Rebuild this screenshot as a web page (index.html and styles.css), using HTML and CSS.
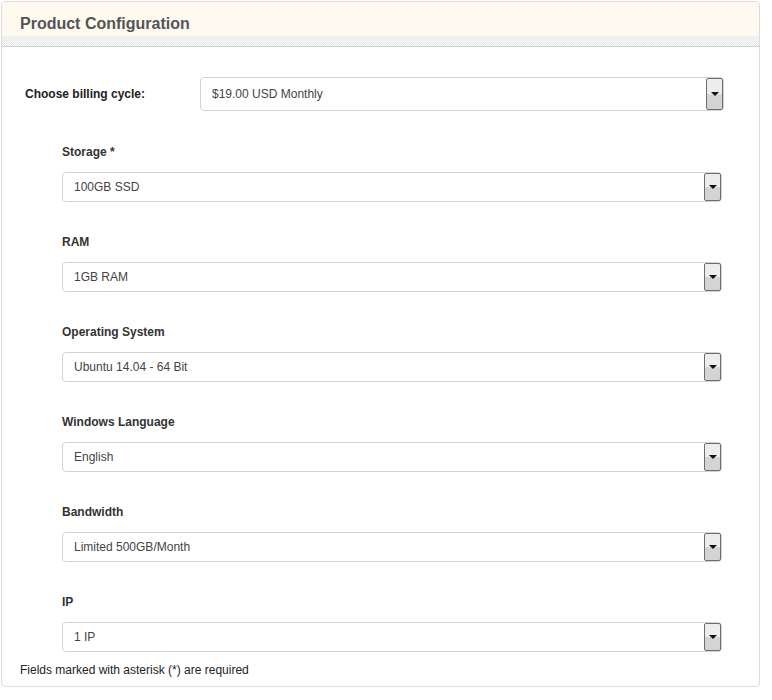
FILE: index.html
```html
<!DOCTYPE html>
<html>
<head>
<meta charset="utf-8">
<link rel="stylesheet" href="styles.css">
</head>
<body>
<div class="panel">
  <div class="panel-head">
    <h2 class="title">Product Configuration</h2>
  </div>
  <div class="panel-body">
    <div class="billing-row">
      <div class="billing-label">Choose billing cycle:</div>
      <div class="select select-lg"><span class="select-text">$19.00 USD Monthly</span><span class="select-btn"><span class="arrow"></span></span></div>
    </div>
    <div class="groups">
      <div class="group">
        <div class="group-label">Storage *</div>
        <div class="select"><span class="select-text">100GB SSD</span><span class="select-btn"><span class="arrow"></span></span></div>
      </div>
      <div class="group">
        <div class="group-label">RAM</div>
        <div class="select"><span class="select-text">1GB RAM</span><span class="select-btn"><span class="arrow"></span></span></div>
      </div>
      <div class="group">
        <div class="group-label">Operating System</div>
        <div class="select"><span class="select-text">Ubuntu 14.04 - 64 Bit</span><span class="select-btn"><span class="arrow"></span></span></div>
      </div>
      <div class="group">
        <div class="group-label">Windows Language</div>
        <div class="select"><span class="select-text">English</span><span class="select-btn"><span class="arrow"></span></span></div>
      </div>
      <div class="group">
        <div class="group-label">Bandwidth</div>
        <div class="select"><span class="select-text">Limited 500GB/Month</span><span class="select-btn"><span class="arrow"></span></span></div>
      </div>
      <div class="group">
        <div class="group-label">IP</div>
        <div class="select"><span class="select-text">1 IP</span><span class="select-btn"><span class="arrow"></span></span></div>
      </div>
    </div>
    <p class="note">Fields marked with asterisk (*) are required</p>
  </div>
</div>
</body>
</html>
```

FILE: styles.css
```css
html, body {
  margin: 0;
  padding: 0;
  background: #fff;
}
body {
  font-family: "Liberation Sans", Arial, sans-serif;
  font-size: 12px;
  color: #333;
}
.panel {
  box-sizing: border-box;
  margin: 1px 0 0 1px;
  width: 759px;
  height: 686px;
  border: 1px solid #dcdcdc;
  border-radius: 4px;
  overflow: hidden;
}
.panel-head {
  height: 44px;
  background-color: #fffaf0;
  border-bottom: 1px solid #cfcfcf;
  position: relative;
  display: flex;
  flex-direction: column;
}
.panel-head::after {
  content: "";
  display: block;
  height: 10px;
  margin-top: auto;
  background-color: #f6f6f6;
  background-image: repeating-conic-gradient(#e6e6e6 0 25%, #fafafa 0 50%);
  background-size: 2px 2px;
}
.title {
  margin: 0;
  padding: 13px 0 0 18px;
  font-size: 16px;
  line-height: 18px;
  font-weight: bold;
  color: #555;
}
.panel-body {
  padding: 30px 0 0 0;
}
.billing-row {
  display: flex;
  align-items: center;
  padding-left: 23px;
}
.billing-label {
  width: 175px;
  font-weight: bold;
  color: #222;
}
.select {
  box-sizing: border-box;
  position: relative;
  display: flex;
  align-items: center;
  height: 30px;
  width: 660px;
  border: 1px solid #d2d2d2;
  border-radius: 4px;
  background: #fff;
}
.select-lg {
  width: 524px;
  height: 34px;
}
.select-text {
  padding-left: 11px;
  color: #444;
}
.select-btn {
  box-sizing: border-box;
  position: absolute;
  right: 0;
  top: 0;
  bottom: 0;
  width: 17px;
  border: 1px solid #6e6e6e;
  border-radius: 2px;
  background: linear-gradient(#ededed 0 50%, #d4d4d4 50% 100%);
  display: flex;
  align-items: center;
  justify-content: center;
}
.arrow {
  width: 0;
  height: 0;
  border-left: 4px solid transparent;
  border-right: 4px solid transparent;
  border-top: 4px solid #111;
}
.groups {
  padding: 31px 0 0 60px;
  display: flex;
  flex-direction: column;
  gap: 30px;
}
.group-label {
  font-weight: bold;
  line-height: 17px;
  padding-top: 2px;
  margin-bottom: 11px;
  color: #333;
}
.note {
  margin: 11px 0 0 18px;
  line-height: 15px;
  color: #222;
}
```
